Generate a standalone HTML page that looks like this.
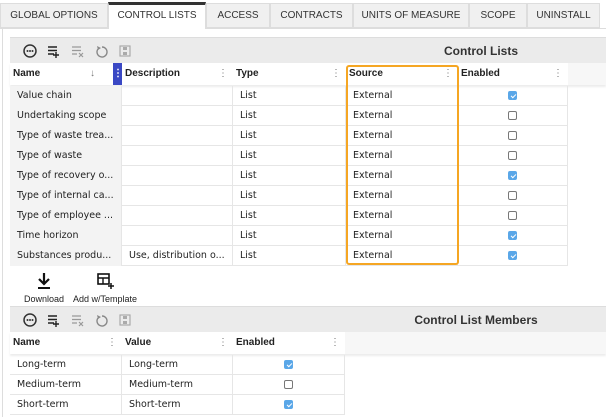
<!DOCTYPE html>
<html><head><meta charset="utf-8"><style>
*{box-sizing:border-box;margin:0;padding:0}
body{width:606px;height:417px;background:#fff;position:relative;overflow:hidden;font-family:"Liberation Sans",sans-serif;color:#222}
.abs{position:absolute}
.tab{position:absolute;top:3px;height:25px;background:#f0f0f0;border:1px solid #ddd;font-size:10px;line-height:23px;text-align:center;color:#333}
.tab.act{background:#fff;border-top:3px solid #333;top:2px;height:27px;line-height:22px;border-bottom:none}
.tb{position:absolute;left:10px;right:0;height:26px;background:#ebebeb;border-top:1px solid #ddd}
.tb .t{position:absolute;right:0;width:250px;text-align:center;font-weight:bold;font-size:12px;line-height:26px;color:#333}
.hd{position:absolute;height:22px;background:#fff;box-shadow:0 2px 2px rgba(0,0,0,.08);font-weight:bold;font-size:10px;line-height:22px}
.hc{position:absolute;top:0;height:22px;padding-left:3px}
.dots{position:absolute;right:5px;top:0;color:#777;font-weight:normal}
.row{position:absolute;height:20px;border-bottom:1px solid #e6e6e6;font-family:"DejaVu Sans",sans-serif;font-size:9.5px;line-height:20px}
.c{position:absolute;top:0;height:20px;border-right:1px solid #e6e6e6;padding-left:7px;white-space:nowrap}
.cb{position:absolute;top:5px;width:9px;height:9px;border:1px solid #777;border-radius:2px;background:#fff}
.cb.on{background:#5aa7e8;border-color:#5aa7e8}
.cb.on:after{content:"";position:absolute;left:2.5px;top:0.5px;width:2px;height:4px;border:solid #fff;border-width:0 1px 1px 0;transform:rotate(45deg)}
</style></head><body>
<div class="abs" style="left:2px;top:28px;width:1px;height:389px;background:#ddd"></div>
<div class="abs" style="left:0;top:28px;width:606px;height:1px;background:#ddd"></div>
<div class="tab" style="left:0;width:108px">GLOBAL OPTIONS</div>
<div class="tab act" style="left:108px;width:98px">CONTROL LISTS</div>
<div class="tab" style="left:206px;width:64px">ACCESS</div>
<div class="tab" style="left:270px;width:83px">CONTRACTS</div>
<div class="tab" style="left:353px;width:116px">UNITS OF MEASURE</div>
<div class="tab" style="left:469px;width:58px">SCOPE</div>
<div class="tab" style="left:527px;width:73px">UNINSTALL</div>

<div class="tb" style="top:37px"><div class="t">Control Lists</div>
<svg class="abs" style="left:12px;top:5px" width="120" height="16" viewBox="0 0 120 16">
<circle cx="8" cy="8" r="6" fill="none" stroke="#333" stroke-width="1.5"/><circle cx="5.5" cy="8" r="1" fill="#333"/><circle cx="8" cy="8" r="1" fill="#333"/><circle cx="10.5" cy="8" r="1" fill="#333"/>
<path d="M26 4h9M26 7.5h9M26 11h6M34 9v6M31 12h6" stroke="#222" stroke-width="1.4"/>
<path d="M50 4h9M50 7.5h9M50 11h5M57 10l4 4M61 10l-4 4" stroke="#999" stroke-width="1.2"/>
<path d="M80 4a5 5 0 1 1-4 2" fill="none" stroke="#888" stroke-width="1.4"/><path d="M75 3l1 4 3-2z" fill="#888"/>
<rect x="98" y="3" width="10" height="10" fill="none" stroke="#aaa" stroke-width="1.2"/><rect x="101" y="4" width="4" height="3" fill="#aaa"/><rect x="101" y="9" width="4" height="3" fill="#aaa"/>
</svg></div>
<div class="hd" style="left:10px;top:63px;width:596px">
<div class="hc" style="left:0;width:112px">Name<span style="position:absolute;left:80px;color:#777;font-weight:normal">↓</span></div>
<div class="abs" style="left:103px;top:0;width:9px;height:22px;background:#3a48c4;color:#fff;text-align:center;font-weight:bold">⋮</div>
<div class="hc" style="left:112px;width:111px">Description<span class="dots">⋮</span></div>
<div class="hc" style="left:223px;width:113px">Type<span class="dots">⋮</span></div>
<div class="hc" style="left:336px;width:112px">Source<span class="dots">⋮</span></div>
<div class="hc" style="left:448px;width:110px">Enabled<span class="dots">⋮</span></div>
<div class="abs" style="left:558px;top:0;width:38px;height:22px;background:#f7f7f7"></div>
</div>

<div id="g1"></div>
<div class="abs" style="left:346px;top:65px;width:113px;height:200px;border:2px solid #f5a623;border-radius:3px"></div>

<div class="abs" style="left:22px;top:272px;width:44px;font-size:9px;text-align:center;white-space:nowrap">
<svg width="16" height="18" viewBox="0 0 16 18"><path d="M8 1v10M3 7l5 5 5-5" stroke="#111" stroke-width="2.2" fill="none"/><path d="M2 16h12" stroke="#111" stroke-width="2"/></svg><div style="margin-top:2px">Download</div></div>
<div class="abs" style="left:70px;top:272px;width:70px;font-size:9px;text-align:center;white-space:nowrap">
<svg width="18" height="18" viewBox="0 0 18 18"><rect x="2" y="2" width="11" height="10" fill="none" stroke="#111" stroke-width="1.6"/><path d="M2 6h11M7 6v6" stroke="#111" stroke-width="1.4"/><path d="M15 11v6M12 14h6" stroke="#111" stroke-width="1.5"/></svg><div style="margin-top:2px">Add w/Template</div></div>

<div class="tb" style="top:306px"><div class="t" style="width:250px;right:5px">Control List Members</div>
<svg class="abs" style="left:12px;top:5px" width="120" height="16" viewBox="0 0 120 16">
<circle cx="8" cy="8" r="6" fill="none" stroke="#333" stroke-width="1.5"/><circle cx="5.5" cy="8" r="1" fill="#333"/><circle cx="8" cy="8" r="1" fill="#333"/><circle cx="10.5" cy="8" r="1" fill="#333"/>
<path d="M26 4h9M26 7.5h9M26 11h6M34 9v6M31 12h6" stroke="#222" stroke-width="1.4"/>
<path d="M50 4h9M50 7.5h9M50 11h5M57 10l4 4M61 10l-4 4" stroke="#999" stroke-width="1.2"/>
<path d="M80 4a5 5 0 1 1-4 2" fill="none" stroke="#888" stroke-width="1.4"/><path d="M75 3l1 4 3-2z" fill="#888"/>
<rect x="98" y="3" width="10" height="10" fill="none" stroke="#aaa" stroke-width="1.2"/><rect x="101" y="4" width="4" height="3" fill="#aaa"/><rect x="101" y="9" width="4" height="3" fill="#aaa"/>
</svg></div>
<div class="hd" style="left:10px;top:332px;width:596px">
<div class="hc" style="left:0;width:112px">Name<span class="dots">⋮</span></div>
<div class="hc" style="left:112px;width:111px">Value<span class="dots">⋮</span></div>
<div class="hc" style="left:223px;width:112px">Enabled<span class="dots">⋮</span></div>
<div class="abs" style="left:335px;top:0;width:261px;height:22px;background:#f7f7f7"></div>
</div>
<div id="g2"></div>

<script>
var r1=[["Value chain","",1],["Undertaking scope","",0],["Type of waste trea...","",0],["Type of waste","",0],["Type of recovery o...","",1],["Type of internal ca...","",0],["Type of employee ...","",0],["Time horizon","",1],["Substances produ...","Use, distribution o...",1]];
var h="";
r1.forEach(function(r,i){h+='<div class="row" style="left:10px;top:'+(86+i*20)+'px;width:558px">'+
'<div class="c" style="left:0;width:112px;background:#f3f3f3">'+r[0]+'</div>'+
'<div class="c" style="left:112px;width:111px">'+r[1]+'</div>'+
'<div class="c" style="left:223px;width:113px;padding-left:7px">List</div>'+
'<div class="c" style="left:336px;width:112px">External</div>'+
'<div class="c" style="left:448px;width:110px"><div class="cb'+(r[2]?' on':'')+'" style="left:50px"></div></div></div>';});
document.getElementById("g1").outerHTML=h;
var r2=[["Long-term",1],["Medium-term",0],["Short-term",1]];h="";
r2.forEach(function(r,i){h+='<div class="row" style="left:10px;top:'+(355+i*20)+'px;width:335px">'+
'<div class="c" style="left:0;width:112px">'+r[0]+'</div>'+
'<div class="c" style="left:112px;width:111px">'+r[0]+'</div>'+
'<div class="c" style="left:223px;width:112px"><div class="cb'+(r[1]?' on':'')+'" style="left:51px"></div></div></div>';});
document.getElementById("g2").outerHTML=h;
</script>
</body></html>
